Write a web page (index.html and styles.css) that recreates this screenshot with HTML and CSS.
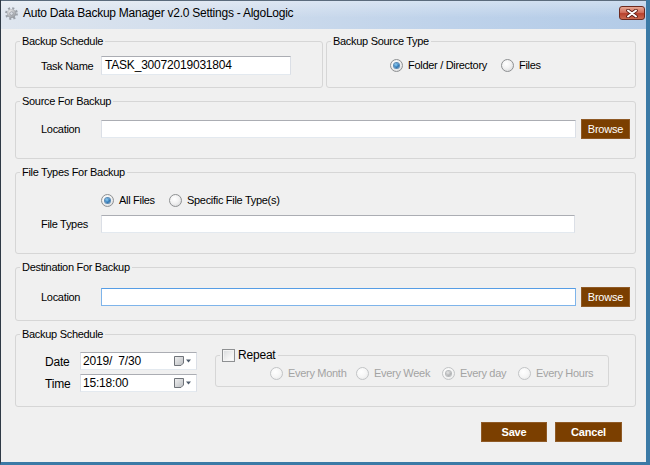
FILE: index.html
```html
<!DOCTYPE html>
<html>
<head>
<meta charset="utf-8">
<title>Auto Data Backup Manager v2.0 Settings - AlgoLogic</title>
<link rel="stylesheet" href="styles.css">
</head>
<body>
<div class="window">
  <div class="titlebar">
    <svg class="app-icon" width="13" height="13" viewBox="0 0 13 13">
      <defs>
        <radialGradient id="gg" cx="40%" cy="35%" r="70%">
          <stop offset="0" stop-color="#f4f4f4"/>
          <stop offset="1" stop-color="#8a8f96"/>
        </radialGradient>
      </defs>
      <circle cx="6.5" cy="6.5" r="5.2" fill="none" stroke="#9aa0a8" stroke-width="2.4" stroke-dasharray="2 2.1"/>
      <circle cx="6.5" cy="6.5" r="4.6" fill="url(#gg)"/>
      <circle cx="6.5" cy="6.5" r="1.8" fill="#d8dce2" stroke="#7d838b" stroke-width="0.6"/>
    </svg>
    <span class="title">Auto Data Backup Manager v2.0 Settings - AlgoLogic</span>
    <div class="close-btn">
      <svg width="12" height="9" viewBox="0 0 12 9">
        <path d="M2 1.5 L10 7.5 M10 1.5 L2 7.5" stroke="#5a1a12" stroke-width="3.6" stroke-linecap="round"/>
        <path d="M2 1.5 L10 7.5 M10 1.5 L2 7.5" stroke="#ffffff" stroke-width="2" stroke-linecap="round"/>
      </svg>
    </div>
  </div>

  <div class="client">
    <div class="top-row">
      <fieldset class="group group-task">
        <legend>Backup Schedule</legend>
        <div class="field-row task-row">
          <span class="lbl">Task Name</span>
          <div class="textbox task-box">TASK_30072019031804</div>
        </div>
      </fieldset>
      <fieldset class="group group-srctype">
        <legend>Backup Source Type</legend>
        <div class="radio-grid srctype-grid">
          <span class="opt"><span class="radio checked"></span>Folder / Directory</span>
          <span class="opt"><span class="radio"></span>Files</span>
        </div>
      </fieldset>
    </div>

    <fieldset class="group group-source">
      <legend>Source For Backup</legend>
      <div class="field-row loc-row">
        <span class="lbl">Location</span>
        <div class="textbox loc-box"></div>
        <div class="btn browse">Browse</div>
      </div>
    </fieldset>

    <fieldset class="group group-types">
      <legend>File Types For Backup</legend>
      <div class="radio-grid types-grid">
        <span class="opt"><span class="radio checked"></span>All Files</span>
        <span class="opt"><span class="radio"></span>Specific File Type(s)</span>
      </div>
      <div class="field-row types-row">
        <span class="lbl">File Types</span>
        <div class="textbox types-box"></div>
      </div>
    </fieldset>

    <fieldset class="group group-dest">
      <legend>Destination For Backup</legend>
      <div class="field-row loc-row dest-row">
        <span class="lbl">Location</span>
        <div class="textbox loc-box focused"></div>
        <div class="btn browse">Browse</div>
      </div>
    </fieldset>

    <fieldset class="group group-sched">
      <legend>Backup Schedule</legend>
      <div class="sched-body">
        <div class="datetime">
          <div class="dt-row">
            <span class="dt-lbl">Date</span>
            <div class="picker">
              <span class="picker-val">2019/&nbsp;&nbsp;7/30</span>
              <svg class="cal" width="17" height="10" viewBox="0 0 17 10">
                <defs>
                  <linearGradient id="cg" x1="0" y1="0" x2="1" y2="1">
                    <stop offset="0" stop-color="#f2f2f2"/>
                    <stop offset="1" stop-color="#b9bcc0"/>
                  </linearGradient>
                </defs>
                <path d="M0.5 0.5 H9.5 V7 L7 9.5 H0.5 Z" fill="url(#cg)" stroke="#6f7379"/>
                <path d="M12 3.5 H17 L14.5 6.5 Z" fill="#4d5a6a"/>
              </svg>
            </div>
          </div>
          <div class="dt-row">
            <span class="dt-lbl">Time</span>
            <div class="picker">
              <span class="picker-val">15:18:00</span>
              <svg class="cal" width="17" height="10" viewBox="0 0 17 10">
                <path d="M0.5 0.5 H9.5 V7 L7 9.5 H0.5 Z" fill="url(#cg)" stroke="#6f7379"/>
                <path d="M12 3.5 H17 L14.5 6.5 Z" fill="#4d5a6a"/>
              </svg>
            </div>
          </div>
        </div>
        <fieldset class="group group-repeat">
          <legend><span class="checkbox"></span><span class="repeat-txt">Repeat</span></legend>
          <div class="radio-grid repeat-grid">
            <span class="opt disabled"><span class="radio"></span>Every Month</span>
            <span class="opt disabled"><span class="radio"></span>Every Week</span>
            <span class="opt disabled"><span class="radio checked"></span>Every day</span>
            <span class="opt disabled"><span class="radio"></span>Every Hours</span>
          </div>
        </fieldset>
      </div>
    </fieldset>

    <div class="actions">
      <div class="btn action save">Save</div>
      <div class="btn action cancel">Cancel</div>
    </div>
  </div>
</div>
</body>
</html>
```

FILE: styles.css
```css
* { box-sizing: border-box; }

html, body {
  margin: 0;
  padding: 0;
}

body {
  width: 650px;
  height: 465px;
  overflow: hidden;
  background: #f0f0f0;
  font-family: "Liberation Sans", Arial, sans-serif;
  font-size: 11px;
  letter-spacing: -0.3px;
  color: #000;
}

.window {
  width: 650px;
  height: 465px;
  display: flex;
  flex-direction: column;
  border-left: 1px solid #2f3a46;
  border-right: 4px solid #3b7aa6;
  border-bottom: 3px solid #3b7aa6;
  background: #f0f0f0;
}

/* Title bar */
.titlebar {
  height: 29px;
  flex: none;
  display: flex;
  align-items: center;
  padding: 0 1px 4px 4px;
  border-top: 1px solid #5b6b7c;
  background:
    linear-gradient(to bottom, rgba(255,255,255,0.35), rgba(255,255,255,0) 60%),
    linear-gradient(to right, #dfe6ef 0%, #cfdcec 35%, #bed2ea 70%, #b3cbe7 100%);
}

.app-icon {
  flex: none;
  margin-right: 5px;
}

.title {
  font-size: 12px;
  letter-spacing: -0.25px;
  color: #000;
}

.close-btn {
  margin-left: auto;
  width: 26px;
  height: 14px;
  border: 1px solid #6d2a1f;
  border-radius: 3px;
  background: linear-gradient(to bottom, #e7a895 0%, #d2705d 45%, #b8412d 55%, #cc6a50 100%);
  display: flex;
  align-items: center;
  justify-content: center;
}

/* Client area */
.client {
  flex: 1;
  display: flex;
  flex-direction: column;
  gap: 7px;
  padding: 6px 10px 0 14px;
}

.top-row {
  display: flex;
}

.group {
  margin: 0;
  padding: 0;
  min-width: 0;
  border: 1px solid #d6d6d6;
  border-radius: 3px;
}

.group > legend {
  margin-left: 4px;
  padding: 0 2px;
  line-height: 13px;
  font-size: 11px;
}

.group-task {
  width: 308px;
  flex: none;
}

.group-srctype {
  flex: 1;
  margin-left: 3px;
}

.field-row {
  display: flex;
  align-items: center;
}

.lbl {
  width: 60px;
  flex: none;
}

.textbox {
  height: 19px;
  background: #fff;
  border: 1px solid #dbdfe6;
  border-top-color: #abadb3;
  border-bottom-color: #e3e9ef;
  padding: 0 3px;
  line-height: 17px;
  font-size: 12px;
  letter-spacing: -0.2px;
}

.task-row {
  padding: 8px 0 12px 25px;
}

.task-box {
  width: 190px;
}

.radio-grid {
  display: grid;
  align-items: center;
}

.srctype-grid {
  grid-template-columns: 111px auto;
  padding: 10px 0 0 63px;
}

.opt {
  display: flex;
  align-items: center;
  gap: 5px;
  line-height: 14px;
  white-space: nowrap;
}

.radio {
  width: 13px;
  height: 13px;
  flex: none;
  border-radius: 50%;
  border: 1px solid #8e9092;
  background: radial-gradient(circle at 40% 35%, #ffffff 0%, #f2f2f2 45%, #d0d2d4 100%);
  display: flex;
  align-items: center;
  justify-content: center;
}

.radio.checked::after {
  content: "";
  width: 5px;
  height: 5px;
  border-radius: 50%;
  background: radial-gradient(circle at 40% 35%, #8fd0f5 0%, #2b74b4 60%, #1b4f80 100%);
  box-shadow: 0 0 0 1px #5b8bb5;
}

.opt.disabled {
  color: #a3a3a3;
}

.opt.disabled .radio {
  border-color: #c2c4c6;
  background: radial-gradient(circle at 40% 35%, #ffffff 0%, #f6f6f6 50%, #e4e5e6 100%);
}

.opt.disabled .radio.checked::after {
  background: radial-gradient(circle at 40% 35%, #e8e8e8 0%, #a9abad 70%);
  box-shadow: 0 0 0 1px #b8babc;
}

/* Source / destination rows */
.loc-row {
  padding: 11px 4px 19px 25px;
}

.loc-box {
  width: 475px;
  height: 18px;
}

.loc-box.focused {
  border-color: #7eb4ea;
  border-top-color: #569de5;
}

.btn {
  display: flex;
  align-items: center;
  justify-content: center;
  background: #7b3f00;
  color: #fff;
  font-size: 11px;
  letter-spacing: -0.2px;
  border: 1px solid #8f5a26;
}

.browse {
  width: 49px;
  height: 20px;
  margin-left: 5px;
}

.dest-row {
  padding: 13px 4px 13px 25px;
}

/* File types */
.types-grid {
  grid-template-columns: 68px auto;
  padding: 14px 0 0 85px;
}

.types-row {
  padding: 8px 0 20px 25px;
}

.types-box {
  width: 474px;
  height: 18px;
}

/* Schedule */
.sched-body {
  display: flex;
  align-items: flex-start;
  padding: 8px 0 14px 29px;
}

.datetime {
  display: flex;
  flex-direction: column;
  gap: 4px;
  margin-top: 3px;
}

.dt-row {
  display: flex;
  align-items: center;
}

.dt-lbl {
  width: 35px;
  font-size: 12px;
  letter-spacing: -0.2px;
  padding-top: 2px;
}

.picker {
  width: 117px;
  height: 18px;
  background: #fff;
  border: 1px solid #dbdfe6;
  border-top-color: #abadb3;
  border-bottom-color: #e3e9ef;
  display: flex;
  align-items: center;
  padding: 0 5px 0 2px;
}

.picker-val {
  flex: 1;
  font-size: 12px;
  letter-spacing: -0.2px;
  white-space: nowrap;
}

.cal {
  flex: none;
}

.group-repeat {
  width: 394px;
  margin-left: 18px;
}

.group-repeat > legend {
  margin-left: 4px;
  padding: 0 2px;
  display: flex;
  align-items: center;
}

.checkbox {
  width: 13px;
  height: 13px;
  border: 1px solid #8e9092;
  background: linear-gradient(135deg, #d8dadc 0%, #f3f3f3 60%, #ffffff 100%);
  box-shadow: inset 0 0 0 1px #f4f4f4;
  margin-right: 3px;
}

.repeat-txt {
  font-size: 12px;
  letter-spacing: -0.2px;
}

.repeat-grid {
  grid-template-columns: 86px 86px 76px auto;
  padding: 4px 0 6px 54px;
}

/* Actions */
.actions {
  display: flex;
  justify-content: flex-end;
  gap: 8px;
  margin-top: 8px;
  padding-right: 14px;
}

.action {
  height: 20px;
  font-weight: bold;
  font-size: 11px;
}

.save {
  width: 66px;
}

.cancel {
  width: 67px;
}
```
